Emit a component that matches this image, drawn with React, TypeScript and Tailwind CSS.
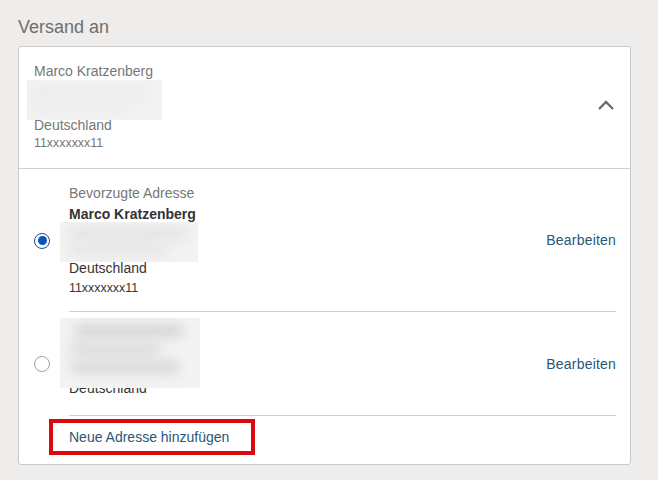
import React from "react";

function Blur({ className, lines }: { className: string; lines: { top: number; left: number; w: number; h: number; c: string }[] }) {
  return (
    <div className={"absolute overflow-hidden bg-[#f3f3f3] z-10 " + className}>
      {lines.map((l, i) => (
        <div
          key={i}
          className="absolute rounded-full blur-[6px]"
          style={{ top: l.top, left: l.left, width: l.w, height: l.h, background: l.c }}
        />
      ))}
    </div>
  );
}

function Radio({ checked }: { checked: boolean }) {
  return checked ? (
    <div className="w-[16px] h-[16px] shrink-0 rounded-full border border-[#1d4f8f] bg-white flex items-center justify-center">
      <div className="w-[9px] h-[9px] rounded-full bg-[#0a56b8]" />
    </div>
  ) : (
    <div className="w-[16px] h-[16px] shrink-0 rounded-full border border-[#a0a0a0] bg-white" />
  );
}

export default function App() {
  return (
    <div
      className="w-[658px] h-[480px] bg-[#eeedeb] pl-[18px] pt-[16px] overflow-hidden"
      style={{ fontFamily: '"Liberation Sans", Arial, sans-serif' }}
    >
      <div className="text-[18px] leading-[22px] text-[#6e6e6e] mb-[8px]">Versand an</div>
      <div className="w-[613px] bg-white border border-[#c9c9c9] rounded-[3px]">
        {/* summary */}
        <div className="flex items-start justify-between border-b border-[#cfcfcf] pl-[15px] pr-[16px] pt-[14px] pb-[17px]">
          <div className="flex flex-col text-[#777777]">
            <div className="text-[14px] leading-[20px]">Marco Kratzenberg</div>
            <div className="relative h-[34px]">
              <Blur
                className="top-[-1px] left-[-7px] w-[135px] h-[40px]"
                lines={[
                  { top: 6, left: 4, w: 120, h: 14, c: "#ececec" },
                  { top: 22, left: 4, w: 100, h: 14, c: "#ededed" },
                ]}
              />
            </div>
            <div className="text-[14px] leading-[20px]">Deutschland</div>
            <div className="text-[12.4px] leading-[16px]">11xxxxxxx11</div>
          </div>
          <svg width="16" height="10" viewBox="0 0 16 10" className="mt-[39px]">
            <polyline points="1,9 8,2 15,9" fill="none" stroke="#6a6a6a" strokeWidth="2.3" />
          </svg>
        </div>

        {/* option 1 */}
        <div className="flex items-center pl-[15px] pr-[14px]">
          <Radio checked />
          <div className="ml-[19px] flex-1 flex items-center justify-between border-b border-[#cfcfcf]">
            <div className="flex flex-col pt-[14px] pb-[13px]">
              <div className="text-[14px] leading-[21px] text-[#777777]">Bevorzugte Adresse</div>
              <div className="text-[14px] leading-[21px] font-bold text-[#333333]">Marco Kratzenberg</div>
              <div className="relative h-[33px]">
                <Blur
                  className="top-[-3px] left-[-9px] w-[138px] h-[40px]"
                  lines={[
                    { top: 6, left: 8, w: 120, h: 12, c: "#e3e3e3" },
                    { top: 22, left: 8, w: 100, h: 12, c: "#e6e6e6" },
                  ]}
                />
              </div>
              <div className="text-[14px] leading-[20px] text-[#333333]">Deutschland</div>
              <div className="text-[12.4px] leading-[20px] text-[#333333]">11xxxxxxx11</div>
            </div>
            <div className="text-[14px] leading-[20px] text-[#2a5677] tracking-[0.2px]">Bearbeiten</div>
          </div>
        </div>

        {/* option 2 */}
        <div className="flex items-center pl-[15px] pr-[14px]">
          <Radio checked={false} />
          <div className="ml-[19px] flex-1 flex items-center justify-between border-b border-[#cfcfcf]">
            <div className="flex flex-col pb-[17px]">
              <div className="relative h-[66px]">
                <Blur
                  className="top-[6px] left-[-9px] w-[140px] h-[70px]"
                  lines={[
                    { top: 6, left: 14, w: 110, h: 14, c: "#d6d6d6" },
                    { top: 24, left: 10, w: 90, h: 14, c: "#dcdcdc" },
                    { top: 42, left: 10, w: 110, h: 14, c: "#dadada" },
                  ]}
                />
              </div>
              <div className="text-[14px] leading-[20px] text-[#333333]">Deutschland</div>
            </div>
            <div className="text-[14px] leading-[20px] text-[#2a5677] tracking-[0.2px]">Bearbeiten</div>
          </div>
        </div>

        {/* add link */}
        <div className="pl-[30px] pt-[3px] pb-[9px]">
          <div className="w-[206px] h-[36px] border-[4px] border-[#dc0a0f] pl-[16px] pt-[4px]">
            <div className="text-[14px] leading-[20px] text-[#2a5677]">Neue Adresse hinzufügen</div>
          </div>
        </div>
      </div>
    </div>
  );
}
